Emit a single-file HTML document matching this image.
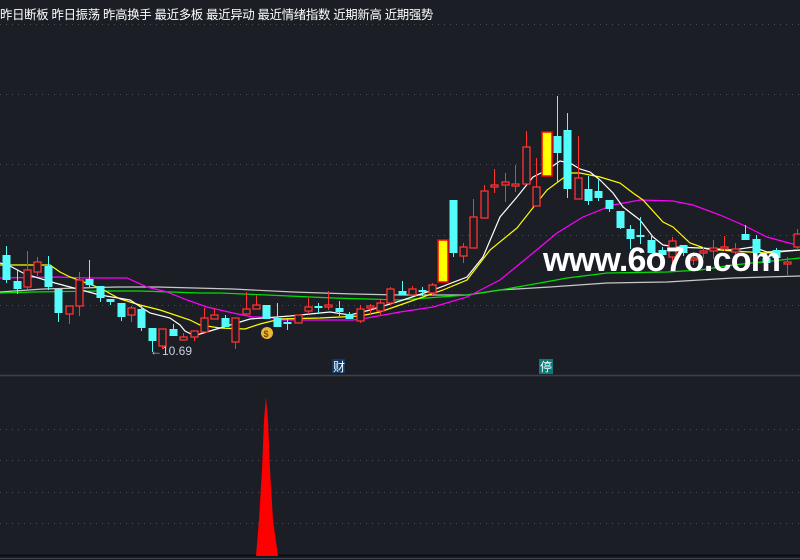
<!DOCTYPE html>
<html><head><meta charset="utf-8">
<style>
html,body{margin:0;padding:0;background:#1c1e26;width:800px;height:560px;overflow:hidden}
#t{position:absolute;left:0;top:5px;font:12.4px "Liberation Sans","Noto Sans CJK SC",sans-serif;color:#fff;white-space:nowrap;letter-spacing:-0.3px}
svg{position:absolute;left:0;top:0}
</style></head><body>
<svg id="s" width="800" height="560" xmlns="http://www.w3.org/2000/svg">
<g stroke="#4a4e5a" stroke-width="1" stroke-dasharray="1 5">
<line x1="0" y1="24.5" x2="800" y2="24.5"/><line x1="0" y1="94.5" x2="800" y2="94.5"/>
<line x1="0" y1="164.5" x2="800" y2="164.5"/><line x1="0" y1="235.5" x2="800" y2="235.5"/>
<line x1="0" y1="305.5" x2="800" y2="305.5"/>
<line x1="0" y1="429.5" x2="800" y2="429.5"/><line x1="0" y1="460.5" x2="800" y2="460.5"/>
<line x1="0" y1="492.5" x2="800" y2="492.5"/><line x1="0" y1="523.5" x2="800" y2="523.5"/>
</g>
<line x1="0" y1="375.5" x2="800" y2="375.5" stroke="#3c404c" stroke-width="1.5"/>
<line x1="0" y1="555.5" x2="800" y2="555.5" stroke="#0c0d10" stroke-width="2"/>
<line x1="0" y1="558.5" x2="800" y2="558.5" stroke="#3c404c" stroke-width="1"/>
<g fill="none" stroke-width="1.2">
<polyline stroke="#c8c8c8" points="0,292 43,289 117,287 157,287 233,289 293,292 353,294 400,295 467,295 500,290 550,287 607,283 667,282 733,278 800,276"/>
<polyline stroke="#00e000" points="0,293 33,292 100,291 140,291 200,293 220,293 267,295 333,298 367,299 400,300 467,295 500,290 540,283 567,278 607,273 667,272 700,270 733,265 800,258"/>
<polyline stroke="#ff00ff" points="0,278 57,277 87,278 127,278 147,287 167,292 187,300 207,307 233,313 253,317 267,317 283,320 333,320 353,320 367,318 400,312 433,307 467,297 500,280 533,253 557,233 583,217 613,205 640,200 673,201 693,205 720,215 743,225 767,237 800,246"/>
<polyline stroke="#ffff00" points="0,265 50,265 60,272 70,277 100,288 120,299 140,305 160,310 190,320 200,325 220,328 245,329 260,324 280,319 320,318 360,316 380,312 400,305 443,290 467,280 490,250 517,228 547,190 570,173 580,173 600,177 620,183 633,193 643,200 663,222 673,227 690,243 707,249 733,251 767,253 800,250"/>
<polyline stroke="#ffffff" points="0,263 10,266 25,274 55,283 70,287 100,295 130,300 150,313 170,318 180,325 185,331 195,336 200,334 220,328 250,319 290,316 330,312 350,315 370,310 400,301 433,290 467,277 483,257 500,217 517,197 533,177 547,170 560,161 570,163 580,169 590,172 600,180 613,193 623,207 640,220 653,237 663,245 677,247 700,248 733,250 753,247 767,252 800,250"/>
</g>
<g id="c"></g>
<polygon fill="#ff0000" points="256,556 259,520 262,470 264,420 266,397 268,420 270,470 273,520 278,556"/>
<text x="543" y="271" font-family="Liberation Sans,sans-serif" font-weight="bold" font-size="34" fill="#fff" textLength="238">www.6o7o.com</text>
<text x="150" y="355" font-family="Liberation Sans,sans-serif" font-size="12" fill="#c8d0e0">←10.69</text>
<circle cx="267" cy="333" r="6" fill="#e8b838"/><text x="263.5" y="337" font-size="9" font-family="Liberation Sans,sans-serif" fill="#7a4a00" font-weight="bold">$</text>
<rect x="332" y="359" width="13" height="14" fill="#123a66"/>
<text x="333" y="371" font-family="Liberation Sans,Noto Sans CJK SC,sans-serif" font-size="12" fill="#fff">财</text>
<rect x="539" y="359" width="14" height="15" fill="#0a7a7a"/>
<text x="540" y="371" font-family="Liberation Sans,Noto Sans CJK SC,sans-serif" font-size="12" fill="#fff">停</text>
</svg>
<div id="t">昨日断板 昨日振荡 昨高换手 最近多板 最近异动 最近情绪指数 近期新高 近期强势</div>
<script>
var d=[
[6,'c',255,280,246,283],[17,'c',281,289,270,294],[27,'r',270,287,251,289],[37,'r',262,272,257,276],[48,'c',266,287,256,290],
[58,'c',289,313,289,322],[69,'r',306,314,306,324],[79,'r',280,306,272,316],[89,'c',279,285,260,287],[100,'c',286,298,286,302],
[110,'c',299,302,299,305],[121,'c',303,317,303,321],[131,'r',308,315,306,322],[141,'c',309,328,306,331],[152,'c',328,341,328,352],
[162,'r',329,346,329,349],[173,'c',329,336,324,336],[183,'r',337,340,333,340],[194,'r',331,337,331,341],[204,'r',318,332,308,332],
[214,'r',315,319,308,319],[225,'c',318,327,315,327],[235,'r',318,342,318,349],[246,'r',309,314,292,314],[256,'r',305,309,295,309],
[266,'c',305,319,305,319],[277,'c',318,327,303,327],[287,'c',322,324,318,330],[298,'r',315,323,315,323],[308,'r',307,311,298,314],
[318,'c',306,308,303,313],[328,'r',305,307,291,310],[339,'c',308,312,301,316],[349,'c',314,319,312,319],[360,'r',309,321,305,323],
[370,'r',306,308,304,314],[380,'r',303,311,300,315],[390,'r',289,303,287,305],[402,'c',291,295,281,295],[412,'r',289,295,286,296],
[422,'c',290,292,287,296],[432,'r',285,293,283,295],[443,'y',240,282,240,282],[453,'c',200,253,200,257],[463,'r',247,256,243,263],
[473,'r',217,248,199,248],[484,'r',191,218,185,218],[494,'r',185,187,169,193],[505,'r',182,185,173,202],[515,'r',184,186,165,192],
[526,'r',147,184,131,184],[536,'r',187,206,158,206],[547,'y',132,176,132,176],[557,'c',136,153,96,183],[567,'c',130,189,113,198],
[578,'r',178,199,136,199],[588,'c',189,201,176,205],[598,'c',191,198,180,201],[609,'c',200,209,200,212],[620,'c',211,228,211,229],
[630,'c',229,239,225,249],[640,'c',235,237,217,244],[651,'c',240,253,236,253],[662,'c',250,255,247,258],[672,'r',241,257,237,263],
[683,'c',245,253,245,256],[693,'r',258,260,252,265],[703,'r',251,253,247,258],[713,'r',248,251,240,259],[724,'r',247,249,236,251],
[735,'r',249,252,243,254],[745,'c',234,240,225,240],[756,'c',239,253,235,258],[766,'c',258,263,255,265],[776,'c',250,258,248,260],
[787,'r',262,264,257,275],[797,'r',234,247,229,250]];
var h='';
d.forEach(function(a){var x=a[0],t=a[1];
if(t=='y'){h+='<rect x="'+(x-5)+'" y="'+a[2]+'" width="10" height="'+(a[3]-a[2])+'" fill="#ffff00" stroke="#ff0000" stroke-width="1.5"/>';return;}
var col=t=='c'?'#54fcfc':'#ff3232';
h+='<line x1="'+(x+.5)+'" y1="'+a[4]+'" x2="'+(x+.5)+'" y2="'+a[5]+'" stroke="'+col+'"/>';
var hh=Math.max(a[3]-a[2],1.5);
if(t=='c')h+='<rect x="'+(x-3.5)+'" y="'+a[2]+'" width="8" height="'+hh+'" fill="'+col+'"/>';
else h+='<rect x="'+(x-3)+'" y="'+a[2]+'" width="7" height="'+hh+'" fill="#1c1e26" stroke="'+col+'" stroke-width="1.3"/>';
});
document.getElementById('c').innerHTML=h;
</script>
</body></html>
